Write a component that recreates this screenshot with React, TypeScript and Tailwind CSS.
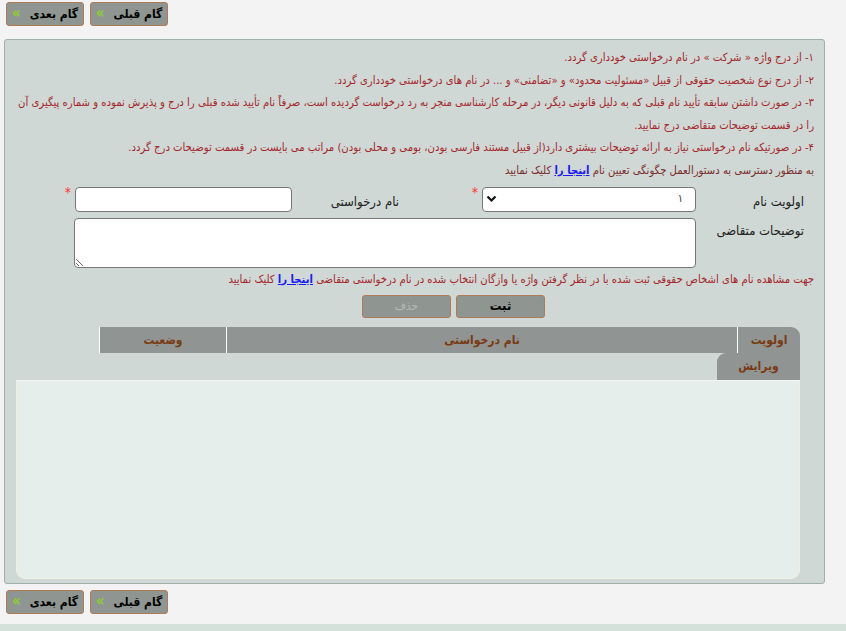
import { useState } from 'react';

const font = 'font-["DejaVu_Sans_Condensed","DejaVu_Sans",sans-serif]';

const StepButton = ({ label }: { label: string }) => (
  <button dir="ltr" className="w-[78px] h-[24px] flex items-center justify-center gap-[9px] whitespace-nowrap rounded-[3px] border border-[#b07a58] bg-[#8f9691] text-[12px] font-bold text-black">
    <span className="text-[#8fce2e] text-[15px] leading-none -mt-[2px]">«</span>
    <span dir="rtl">{label}</span>
  </button>
);

const StepBar = () => (
  <div dir="ltr" className="flex gap-[6px] px-[6px]">
    <StepButton label="گام بعدی" />
    <StepButton label="گام قبلی" />
  </div>
);

const rules = [
  '۱- از درج واژه « شرکت » در نام درخواستی خودداری گردد.',
  '۲- از درج نوع شخصیت حقوقی از قبیل «مسئولیت محدود» و «تضامنی» و ... در نام های درخواستی خودداری گردد.',
  '۳- در صورت داشتن سابقه تأیید نام قبلی که به دلیل قانونی دیگر، در مرحله کارشناسی منجر به رد درخواست گردیده است، صرفاً نام تأیید شده قبلی را درج و پذیرش نموده و شماره پیگیری آن را در قسمت توضیحات متقاضی درج نمایید.',
  '۴- در صورتیکه نام درخواستی نیاز به ارائه توضیحات بیشتری دارد(از قبیل مستند فارسی بودن، بومی و محلی بودن) مراتب می بایست در قسمت توضیحات درج گردد.',
];

const Star = () => <span className="w-[14px] text-center text-[#ff3030] text-[14px] leading-[14px] -mt-[2px]">*</span>;

export default function App() {
  const [priority, setPriority] = useState('۱');
  const [name, setName] = useState('');
  const [desc, setDesc] = useState('');

  return (
    <div dir="ltr" className={`${font} min-h-[631px] bg-[#f3f3f3] flex flex-col pt-[2px]`}>
      <StepBar />

      <div dir="rtl" className="ml-[4px] mt-[13px] w-[821px] h-[545px] rounded-[3px] border border-[#9fb0a9] bg-[#cfd8d4] pt-[7px] pr-[10px] pl-[8px] flex flex-col">
        <div className="text-[11.2px] leading-[22.6px] text-[#a5262c]">
          {rules.map((r) => (
            <div key={r}>{r}</div>
          ))}
          <div className="text-[#7a2d2d]">
            به منظور دسترسی به دستورالعمل چگونگی تعیین نام{' '}
            <a href="#" className="text-[#1a1aff] font-bold underline">اینجا را</a> کلیک نمایید
          </div>
        </div>

        <div className="flex items-start mt-[4px] pr-[10px] text-[13px] text-[#222]">
          <label className="w-[108px] pt-[5px]">اولویت نام</label>
          <div className="relative w-[214px] h-[25px]">
            <select
              value={priority}
              onChange={(e) => setPriority(e.target.value)}
              className="w-full h-full appearance-none rounded-[4px] border border-[#777] bg-white pr-[12px] text-[11px] text-[#333] outline-none"
            >
              <option value="۱">۱</option>
              <option value="۲">۲</option>
              <option value="۳">۳</option>
            </select>
            <svg className="pointer-events-none absolute left-[4px] top-[8px]" width="11" height="8" viewBox="0 0 11 8">
              <path d="M1.5 1.5 L5.5 5.5 L9.5 1.5" fill="none" stroke="#111" strokeWidth="2.2" />
            </svg>
          </div>
          <Star />
          <label className="w-[176px] pr-[69px] pt-[5px]">نام درخواستی</label>
          <input
            value={name}
            onChange={(e) => setName(e.target.value)}
            className="w-[217px] h-[25px] rounded-[4px] border border-[#777] bg-white outline-none"
          />
          <Star />
        </div>

        <div className="flex items-start mt-[6px] pr-[10px] text-[13px] text-[#222]">
          <label className="w-[108px] pt-[3px]">توضیحات متقاضی</label>
          <textarea
            value={desc}
            onChange={(e) => setDesc(e.target.value)}
            className="w-[622px] h-[50px] rounded-[4px] border border-[#777] bg-white outline-none resize-y"
          />
        </div>

        <div className="mt-[1px] text-[11.2px] leading-[22px] text-[#a5262c] whitespace-nowrap">
          جهت مشاهده نام های اشخاص حقوقی ثبت شده با در نظر گرفتن واژه یا وازگان انتخاب شده در نام درخواستی متقاضی{' '}
          <a href="#" className="text-[#1a1aff] font-bold underline">اینجا را</a> کلیک نمایید
        </div>

        <div className="flex gap-[5px] mt-[4px] mr-[269px]">
          <button className="w-[89px] h-[23px] rounded-[3px] border border-[#b07a58] bg-[#8f9691] text-[13px] font-bold text-black">ثبت</button>
          <button disabled className="w-[89px] h-[23px] rounded-[3px] border border-[#b07a58] bg-[#8f9691] text-[12px] text-[#b5bab6]">حذف</button>
        </div>

        <div className="mt-[9px] mr-[14px] w-[784px] flex flex-col text-[12px] font-bold text-[#7a3a12]">
          <div className="flex h-[26px]">
            <div className="w-[63px] rounded-tr-[9px] border-l border-white bg-[#909593] flex items-center justify-center">اولویت</div>
            <div className="w-[511px] border-l border-white bg-[#909593] flex items-center justify-center">نام درخواستی</div>
            <div className="w-[127px] border-l border-white bg-[#909593] flex items-center justify-center">وضعیت</div>
          </div>
          <div className="flex h-[27px]">
            <div className="w-[83px] rounded-tl-[9px] bg-[#909593] flex items-center justify-center">ویرایش</div>
          </div>
          <div className="h-[199px] rounded-b-[9px] border border-[#f1f0e2] border-t-[#f4f6f5] bg-[#e6eeec]" />
        </div>
      </div>

      <div className="mt-[6px]">
        <StepBar />
      </div>
      <div className="mt-auto h-[7px] bg-[#d4e0da]" />
    </div>
  );
}
